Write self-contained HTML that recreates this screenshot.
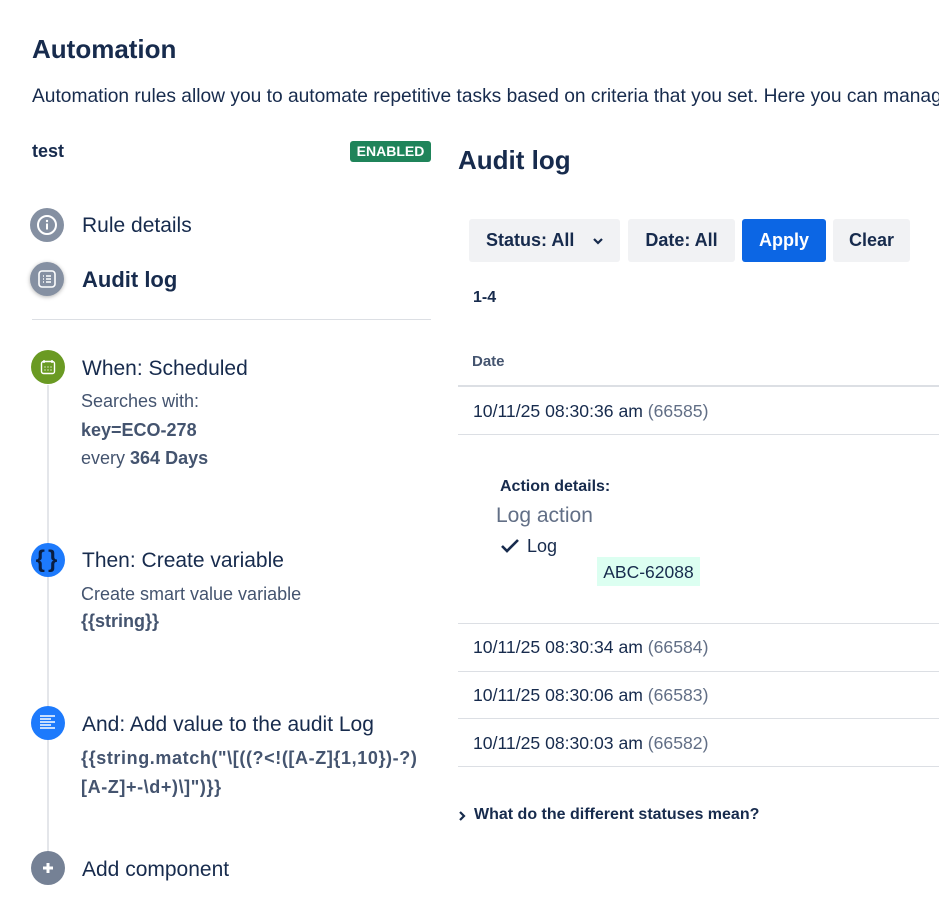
<!DOCTYPE html>
<html><head><meta charset="utf-8"><style>
html,body{margin:0;padding:0;width:939px;height:913px;overflow:hidden;background:#fff;}
body{font-family:"Liberation Sans",sans-serif;color:#172b4d;position:relative;}
.a{position:absolute;white-space:nowrap;}
.c{position:absolute;width:34px;height:34px;border-radius:50%;display:flex;align-items:center;justify-content:center;}
.btn{position:absolute;top:219px;height:43px;border-radius:3px;background:#f1f2f4;font-size:18px;font-weight:600;display:flex;align-items:center;justify-content:center;color:#172b4d;}
.hl{position:absolute;left:458px;width:481px;height:1px;background:#dcdfe4;}
.row{position:absolute;left:473px;font-size:17.6px;color:#172b4d;white-space:nowrap;}
.row span{color:#626f86;}
</style></head><body>
<div class="a" style="left:32px;top:34px;font-size:26px;font-weight:600;">Automation</div>
<div class="a" style="left:32px;top:86px;font-size:19.2px;">Automation rules allow you to automate repetitive tasks based on criteria that you set. Here you can manage</div>

<div class="a" style="left:32px;top:141px;font-size:18px;font-weight:600;">test</div>
<div class="a" style="left:350px;top:141px;width:81px;height:21px;background:#1f845a;border-radius:3px;color:#fff;font-size:14px;font-weight:700;text-align:center;line-height:21px;">ENABLED</div>

<div class="c" style="left:30px;top:208px;background:#8590a2;"><svg width="22" height="22" viewBox="0 0 22 22"><circle cx="11" cy="11" r="9" fill="none" stroke="#fff" stroke-width="2"/><rect x="10" y="9.5" width="2" height="6" fill="#fff"/><circle cx="11" cy="7" r="1.2" fill="#fff"/></svg></div>
<div class="a" style="left:82px;top:214px;font-size:21px;">Rule details</div>
<div class="c" style="left:30px;top:262px;background:#8590a2;box-shadow:0 1px 4px rgba(0,0,0,.3);"><svg width="20" height="20" viewBox="0 0 20 20"><rect x="2" y="2" width="16" height="16" rx="3" fill="none" stroke="#fff" stroke-width="1.6"/><path d="M6 7h1M9 7h5M6 10h1M9 10h5M6 13h1M9 13h5" stroke="#fff" stroke-width="1.4"/></svg></div>
<div class="a" style="left:82px;top:267px;font-size:22px;font-weight:700;">Audit log</div>
<div class="a" style="left:32px;top:319px;width:399px;height:1px;background:#dcdfe4;"></div>

<div class="a" style="left:47px;top:385px;width:2px;height:470px;background:#e4e6ea;"></div>
<div class="c" style="left:31px;top:350px;background:#6a9a23;"><svg width="16" height="16" viewBox="0 0 16 16"><rect x="1.5" y="2.5" width="13" height="12" rx="2" fill="none" stroke="#fff" stroke-width="1.4"/><path d="M4 1v3M12 1v3" stroke="#fff" stroke-width="1.4"/><path d="M4.5 8h1M7.5 8h1M10.5 8h1M4.5 11h1M7.5 11h1M10.5 11h1" stroke="#fff" stroke-width="1.3"/></svg></div>
<div class="a" style="left:82px;top:357px;font-size:21px;">When: Scheduled</div>
<div class="a" style="left:81px;top:391px;font-size:18px;color:#44546f;">Searches with:</div>
<div class="a" style="left:81px;top:420px;font-size:18px;color:#44546f;font-weight:700;">key=ECO-278</div>
<div class="a" style="left:81px;top:448px;font-size:18px;color:#44546f;">every <b>364 Days</b></div>

<div class="c" style="left:31px;top:543px;background:#1d7afc;color:#091e42;font-weight:700;font-size:24px;letter-spacing:3px;">{}</div>
<div class="a" style="left:82px;top:549px;font-size:21px;">Then: Create variable</div>
<div class="a" style="left:81px;top:584px;font-size:18px;color:#44546f;">Create smart value variable</div>
<div class="a" style="left:81px;top:611px;font-size:18px;color:#44546f;font-weight:700;">{{string}}</div>

<div class="c" style="left:31px;top:706px;background:#1d7afc;"><svg width="20" height="18" viewBox="0 0 20 18"><path d="M2 2h15M2 5h11M2 8h15M2 11h11M2 14h15" stroke="#fff" stroke-width="1.5"/></svg></div>
<div class="a" style="left:82px;top:713px;font-size:21px;">And: Add value to the audit Log</div>
<div class="a" style="left:81px;top:748px;font-size:18px;color:#44546f;font-weight:700;letter-spacing:0.6px;">{{string.match("\[((?&lt;!([A-Z]{1,10})-?)</div>
<div class="a" style="left:81px;top:777px;font-size:18px;color:#44546f;font-weight:700;letter-spacing:0.6px;">[A-Z]+-\d+)\]")}}</div>

<div class="c" style="left:31px;top:851px;background:#758195;"><svg width="14" height="14" viewBox="0 0 14 14"><path d="M7 2v10M2 7h10" stroke="#fff" stroke-width="3"/></svg></div>
<div class="a" style="left:82px;top:858px;font-size:21px;">Add component</div>

<div class="a" style="left:458px;top:145px;font-size:26px;font-weight:600;">Audit log</div>
<div class="btn" style="left:469px;width:151px;justify-content:flex-start;"><span style="margin-left:17px;">Status: All</span><svg style="margin-left:18px" width="12" height="8" viewBox="0 0 12 8"><path d="M2 2l4 4 4-4" fill="none" stroke="#172b4d" stroke-width="2.2"/></svg></div>
<div class="btn" style="left:628px;width:107px;">Date: All</div>
<div class="btn" style="left:742px;width:84px;background:#0c66e4;color:#fff;">Apply</div>
<div class="btn" style="left:833px;width:77px;">Clear</div>

<div class="a" style="left:473px;top:289px;font-size:16px;font-weight:700;">1-4</div>
<div class="a" style="left:472px;top:353px;font-size:15px;font-weight:600;color:#44546f;">Date</div>
<div class="hl" style="top:385px;height:2px;"></div>
<div class="row" style="top:401px;">10/11/25 08:30:36 am <span>(66585)</span></div>
<div class="hl" style="top:434px;"></div>

<div class="a" style="left:500px;top:478px;font-size:16px;font-weight:700;">Action details:</div>
<div class="a" style="left:496px;top:504px;font-size:21px;color:#626f86;">Log action</div>
<svg class="a" style="left:500px;top:538px" width="20" height="16" viewBox="0 0 20 16"><path d="M2 8l5 5L18 2" fill="none" stroke="#172b4d" stroke-width="2.6"/></svg>
<div class="a" style="left:527px;top:536px;font-size:18px;">Log</div>
<div class="a" style="left:597px;top:557px;width:103px;height:29px;background:#dcfff1;font-size:17.5px;line-height:31px;text-align:center;color:#172b4d;">ABC-62088</div>

<div class="hl" style="top:623px;"></div>
<div class="row" style="top:637px;">10/11/25 08:30:34 am <span>(66584)</span></div>
<div class="hl" style="top:671px;"></div>
<div class="row" style="top:685px;">10/11/25 08:30:06 am <span>(66583)</span></div>
<div class="hl" style="top:718px;"></div>
<div class="row" style="top:733px;">10/11/25 08:30:03 am <span>(66582)</span></div>
<div class="hl" style="top:766px;"></div>

<svg class="a" style="left:458px;top:810px" width="10" height="12" viewBox="0 0 10 12"><path d="M2 2l4 4-4 4" fill="none" stroke="#172b4d" stroke-width="2.2"/></svg>
<div class="a" style="left:474px;top:806px;font-size:16px;font-weight:700;">What do the different statuses mean?</div>
</body></html>
